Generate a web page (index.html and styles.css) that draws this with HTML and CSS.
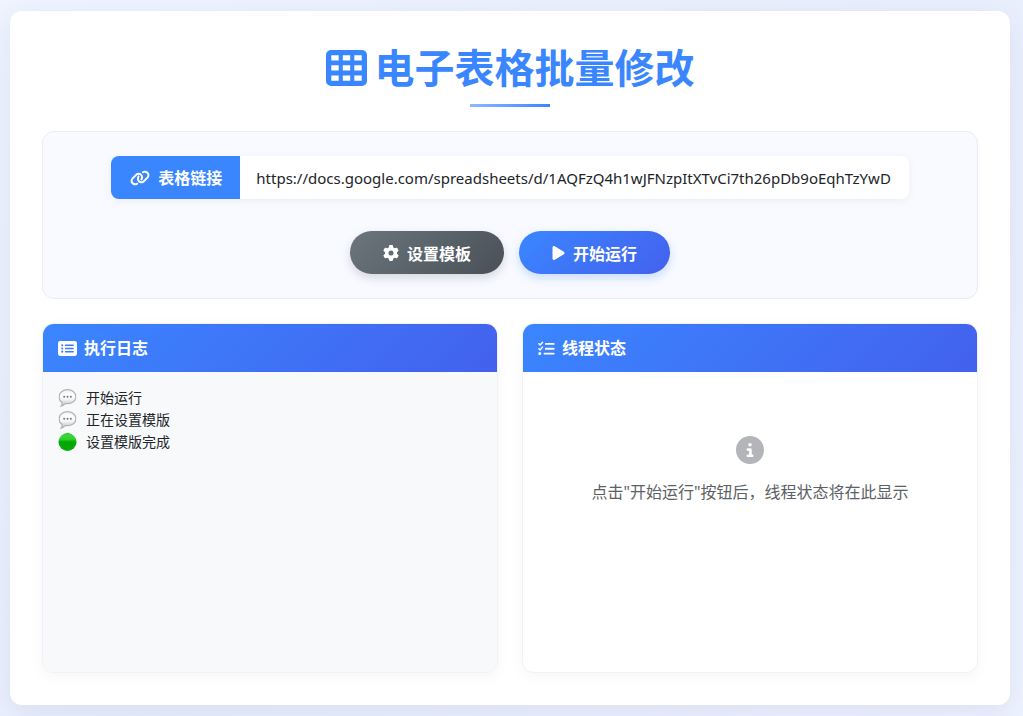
FILE: index.html
```html
<!DOCTYPE html>
<html lang="zh-CN">
<head>
<meta charset="utf-8">
<meta name="viewport" content="width=device-width, initial-scale=1">
<title>电子表格批量修改</title>
<link rel="stylesheet" href="styles.css">
</head>
<body>
<main class="container">
  <h1 class="title">
    <svg class="title-icon" viewBox="0 0 41 36" aria-hidden="true"><path fill="currentColor" fill-rule="evenodd" d="M5 0h31a5 5 0 0 1 5 5v26a5 5 0 0 1-5 5H5a5 5 0 0 1-5-5V5a5 5 0 0 1 5-5zM5.300 5.200v5.300h7.400V5.200zM16.800 5.200v5.300h7.400V5.200zM28.300 5.200v5.300h7.400V5.200zM5.300 15.300v5.300h7.400v-5.300zM16.800 15.300v5.300h7.400v-5.300zM28.300 15.300v5.300h7.400v-5.300zM5.300 25.400v5.300h7.400v-5.300zM16.800 25.400v5.300h7.400v-5.300zM28.300 25.400v5.300h7.400v-5.300z"/></svg>
    <span>电子表格批量修改</span>
  </h1>

  <section class="form-section">
    <div class="input-group">
      <label class="input-label" for="sheet-url">
        <svg class="icon-link" viewBox="0 0 640 512" aria-hidden="true"><path fill="currentColor" d="M579.8 267.7c56.5-56.5 56.5-148 0-204.5c-50-50-128.8-56.5-186.3-15.4l-1.6 1.1c-14.4 10.3-17.7 30.3-7.4 44.6s30.3 17.7 44.6 7.4l1.6-1.1c32.1-22.9 76-19.3 103.8 8.6c31.5 31.5 31.5 82.5 0 114L422.3 334.8c-31.5 31.5-82.5 31.5-114 0c-27.9-27.9-31.5-71.8-8.6-103.8l1.1-1.6c10.3-14.4 6.9-34.4-7.4-44.6s-34.4-6.9-44.6 7.4l-1.1 1.6C206.5 251.2 213 330 263 380c56.5 56.5 148 56.5 204.5 0L579.8 267.7zM60.2 244.3c-56.5 56.5-56.5 148 0 204.5c50 50 128.8 56.5 186.3 15.4l1.6-1.1c14.4-10.3 17.7-30.3 7.4-44.6s-30.3-17.7-44.6-7.4l-1.6 1.1c-32.1 22.9-76 19.3-103.8-8.6C74 372 74 321 105.5 289.5L217.7 177.2c31.5-31.5 82.5-31.5 114 0c27.9 27.9 31.5 71.8 8.6 103.9l-1.1 1.6c-10.3 14.4-6.9 34.4 7.4 44.6s34.4 6.9 44.6-7.4l1.1-1.6C433.5 260.8 427 182 377 132c-56.5-56.5-148-56.5-204.5 0L60.2 244.3z"/></svg>
        <span>表格链接</span>
      </label>
      <input class="url-input" id="sheet-url" type="text" value="https://docs.google.com/spreadsheets/d/1AQFzQ4h1wJFNzpItXTvCi7th26pDb9oEqhTzYwD">
    </div>
    <div class="actions">
      <button class="btn btn-secondary" type="button">
        <svg class="icon-gear" viewBox="0 0 512 512" aria-hidden="true"><path fill="currentColor" d="M495.9 166.6c3.2 8.7 .5 18.4-6.4 24.6l-43.3 39.4c1.1 8.3 1.7 16.8 1.7 25.4s-.6 17.1-1.7 25.4l43.3 39.4c6.9 6.2 9.6 15.9 6.4 24.6c-4.4 11.9-9.7 23.3-15.8 34.3l-4.7 8.1c-6.6 11-14 21.4-22.1 31.2c-5.9 7.2-15.7 9.6-24.5 6.8l-55.7-17.7c-13.4 10.3-28.2 18.9-44 25.4l-12.5 57.1c-2 9.1-9 16.3-18.2 17.8c-13.8 2.3-28 3.5-42.5 3.5s-28.7-1.2-42.5-3.5c-9.2-1.5-16.2-8.7-18.2-17.8l-12.5-57.1c-15.8-6.5-30.6-15.1-44-25.4L83.1 425.9c-8.8 2.8-18.6 .3-24.5-6.8c-8.1-9.8-15.5-20.2-22.1-31.2l-4.7-8.1c-6.1-11-11.4-22.4-15.8-34.3c-3.2-8.7-.5-18.4 6.4-24.6l43.3-39.4C64.6 273.1 64 264.6 64 256s.6-17.1 1.7-25.4L22.4 191.2c-6.9-6.2-9.6-15.9-6.4-24.6c4.4-11.9 9.7-23.3 15.8-34.3l4.7-8.1c6.6-11 14-21.4 22.1-31.2c5.9-7.2 15.7-9.6 24.5-6.8l55.7 17.7c13.4-10.3 28.2-18.9 44-25.4l12.5-57.1c2-9.1 9-16.3 18.2-17.8C227.3 1.2 241.5 0 256 0s28.7 1.2 42.5 3.5c9.2 1.5 16.2 8.7 18.2 17.8l12.5 57.1c15.8 6.5 30.6 15.1 44 25.4l55.7-17.7c8.8-2.8 18.6-.3 24.5 6.8c8.1 9.8 15.5 20.2 22.1 31.2l4.7 8.1c6.1 11 11.4 22.4 15.8 34.3zM256 336a80 80 0 1 0 0-160 80 80 0 1 0 0 160z"/></svg>
        <span>设置模板</span>
      </button>
      <button class="btn btn-primary" type="button">
        <svg class="icon-play" viewBox="0 0 384 512" aria-hidden="true"><path fill="currentColor" d="M73 39c-14.8-9.1-33.4-9.4-48.5-.9S0 62.6 0 80V432c0 17.4 9.4 33.4 24.5 41.9s33.7 8.1 48.5-.9L361 297c14.3-8.7 23-24.2 23-41s-8.7-32.2-23-41L73 39z"/></svg>
        <span>开始运行</span>
      </button>
    </div>
  </section>

  <div class="panels">
    <section class="panel">
      <h2 class="panel-header">
        <svg class="icon-log" viewBox="0 0 18 14" aria-hidden="true"><rect width="18" height="14" rx="2" fill="#fff"/><g fill="#3d79fd"><circle cx="4" cy="4" r="1"/><circle cx="4" cy="7" r="1"/><circle cx="4" cy="10" r="1"/><rect x="6.500" y="3.300" width="8.500" height="1.400" rx=".6"/><rect x="6.500" y="6.300" width="8.500" height="1.400" rx=".6"/><rect x="6.500" y="9.300" width="8.500" height="1.400" rx=".6"/></g></svg>
        <span>执行日志</span>
      </h2>
      <ul class="log">
        <li class="log-item">
          <svg class="emoji" viewBox="0 0 18 18" aria-hidden="true"><use href="#bubble"/></svg>
          <span>开始运行</span>
        </li>
        <li class="log-item">
          <svg class="emoji" viewBox="0 0 18 18" aria-hidden="true"><use href="#bubble"/></svg>
          <span>正在设置模版</span>
        </li>
        <li class="log-item">
          <svg class="emoji" viewBox="0 0 18 18" aria-hidden="true"><circle cx="9" cy="9" r="9" fill="url(#green-ball)"/></svg>
          <span>设置模版完成</span>
        </li>
      </ul>
    </section>

    <section class="panel">
      <h2 class="panel-header">
        <svg class="icon-tasks" viewBox="0 0 17 14" aria-hidden="true"><g fill="none" stroke="#fff" stroke-linecap="round" stroke-linejoin="round"><path stroke-width="1.500" d="M.9 2.300l1.300 1.200L4.400.9M.9 7.200l1.300 1.200 2.200-2.700"/><path stroke-width="1.900" d="M7.800 2.400h7.900M7.800 7.200h7.900M6.500 12.100h9.200"/></g><circle cx="1.800" cy="12.100" r="1.500" fill="#fff"/></svg>
        <span>线程状态</span>
      </h2>
      <div class="empty">
        <svg class="icon-info" viewBox="0 0 512 512" aria-hidden="true"><path fill="currentColor" d="M256 512A256 256 0 1 0 256 0a256 256 0 1 0 0 512zM216 336h24V272H216c-13.3 0-24-10.7-24-24s10.7-24 24-24h48c13.3 0 24 10.7 24 24v88h8c13.3 0 24 10.7 24 24s-10.7 24-24 24H216c-13.3 0-24-10.7-24-24s10.7-24 24-24zm40-208a32 32 0 1 1 0 64 32 32 0 1 1 0-64z"/></svg>
        <p class="empty-text">点击"开始运行"按钮后，线程状态将在此显示</p>
      </div>
    </section>
  </div>
</main>

<svg class="defs" aria-hidden="true">
  <defs>
    <linearGradient id="green-ball" x1="0" y1="0" x2="0" y2="1"><stop offset="0" stop-color="#14b814"/><stop offset=".12" stop-color="#3fd63c"/><stop offset=".35" stop-color="#2fd02d"/><stop offset=".5" stop-color="#03a503"/><stop offset="1" stop-color="#08ac08"/></linearGradient>
    <linearGradient id="bubble-fill" x1="0" y1="0" x2="0" y2="1"><stop offset="0" stop-color="#f0f0f0"/><stop offset=".3" stop-color="#fff"/><stop offset=".6" stop-color="#f4f4f4"/><stop offset="1" stop-color="#bdbdbd"/></linearGradient>
    <symbol id="bubble" viewBox="0 0 18 18"><path d="M9 .7c4.700 0 8.400 3 8.400 7s-3.700 7-8.400 7c-.8 0-1.500-.1-2.200-.2-1 1.300-2.400 2.300-4.200 2.600.8-1 1.200-2.200 1.100-3.500C1.800 12.300.6 10.100.6 7.700c0-4 3.700-7 8.400-7z" fill="url(#bubble-fill)" stroke="#b4b4b4" stroke-width="1.200"/><g fill="#777"><circle cx="5.700" cy="7.700" r="1"/><circle cx="9" cy="7.700" r="1"/><circle cx="12.300" cy="7.700" r="1"/></g></symbol>
  </defs>
</svg>
</body>
</html>
```

FILE: styles.css
```css
* {
  box-sizing: border-box;
}

body {
  margin: 0;
  min-height: 100vh;
  padding: 11px 13px 11px 10px;
  display: flex;
  background: linear-gradient(135deg, #eff4ff 0%, #e9effc 50%, #eef3ff 100%);
  color: #212529;
  font-family: "Noto Sans", "Noto Sans CJK SC", sans-serif;
  font-size: 16px;
  line-height: 24px;
}

.defs {
  position: absolute;
  width: 0;
  height: 0;
}

.container {
  flex: 1;
  min-width: 0;
  display: flex;
  flex-direction: column;
  padding: 32px;
  background: #fff;
  border-radius: 12px;
  box-shadow: 0 8px 30px rgba(60, 70, 150, 0.1);
}

.title {
  margin: 0 0 24px;
  display: flex;
  flex-wrap: wrap;
  justify-content: center;
  align-items: center;
  column-gap: 8px;
  color: #3a86ff;
  font-size: 40px;
  font-weight: 700;
  line-height: 50px;
}

.title::after {
  content: "";
  flex: 0 0 100%;
  height: 3px;
  margin-top: 11px;
  background: linear-gradient(90deg, #8db8ff, #3a86ff) center / 80px 3px no-repeat;
}

.title-icon {
  width: 41px;
  height: 36px;
}

.form-section {
  padding: 24px;
  display: flex;
  flex-direction: column;
  align-items: center;
  gap: 32px;
  background: #f8faff;
  border: 1px solid #e9ecf3;
  border-radius: 12px;
}

.input-group {
  width: 90%;
  display: flex;
  border-radius: 8px;
  box-shadow: 0 2px 10px rgba(0, 0, 0, 0.05);
}

.input-label {
  flex: none;
  padding: 0 18px 0 19px;
  display: flex;
  align-items: center;
  gap: 8px;
  background: #3a86ff;
  border-radius: 8px 0 0 8px;
  color: #fff;
  font-weight: 700;
}

.icon-link {
  width: 20px;
  height: 16px;
}

.url-input {
  flex: 1;
  min-width: 0;
  height: 43px;
  padding: 0 16px;
  background: #fff;
  border: 0;
  border-radius: 0 8px 8px 0;
  color: #212529;
  font-family: inherit;
  font-size: 15px;
}

.actions {
  display: flex;
  flex-wrap: wrap;
  justify-content: center;
  gap: 15px;
}

.btn {
  height: 43px;
  padding: 0 33px;
  display: flex;
  align-items: center;
  gap: 8px;
  border: 0;
  border-radius: 22px;
  color: #fff;
  font-family: inherit;
  font-size: 16px;
  font-weight: 700;
  cursor: pointer;
}

.btn-secondary {
  background: linear-gradient(135deg, #6c757d, #495057);
  box-shadow: 0 4px 10px rgba(73, 80, 87, 0.2);
}

.btn-primary {
  background: linear-gradient(135deg, #3a86ff, #4361ee);
  box-shadow: 0 4px 10px rgba(58, 134, 255, 0.25);
}

.icon-gear {
  width: 16px;
  height: 16px;
}

.icon-play {
  width: 13px;
  height: 16px;
}

.panels {
  flex: 1;
  margin-top: 24px;
  display: grid;
  grid-template-columns: repeat(auto-fit, minmax(320px, 1fr));
  gap: 24px;
}

.panel {
  display: flex;
  flex-direction: column;
  min-height: 350px;
  overflow: hidden;
  border: 1px solid #f1f2f5;
  border-radius: 12px;
  background: #fff;
  box-shadow: 0 4px 15px rgba(0, 0, 0, 0.04);
}

.panel-header {
  margin: 0;
  padding: 12px 15px;
  display: flex;
  align-items: center;
  gap: 7px;
  background: linear-gradient(135deg, #3a86ff, #4361ee);
  color: #fff;
  font-size: 16px;
  font-weight: 700;
}

.icon-log {
  width: 19px;
  height: 15px;
}

.icon-tasks {
  width: 17px;
  height: 15px;
}

.log {
  flex: 1;
  margin: 0;
  padding: 15px;
  background: #f8f9fb;
  list-style: none;
  font-size: 14px;
  line-height: 22px;
}

.log-item {
  display: flex;
  align-items: center;
  gap: 9px;
}

.emoji {
  width: 19px;
  height: 18px;
}

.empty {
  padding: 64px 16px;
  display: flex;
  flex-direction: column;
  align-items: center;
  gap: 16px;
  color: #5c6166;
}

.icon-info {
  width: 28px;
  height: 28px;
  color: #b3b5b8;
}

.empty-text {
  margin: 0;
  text-align: center;
}
```
